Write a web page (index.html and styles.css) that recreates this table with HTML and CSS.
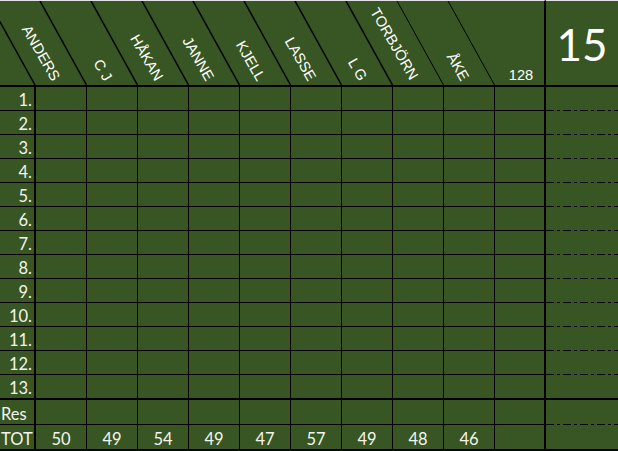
FILE: index.html
```html
<!DOCTYPE html>
<html>
<head>
<meta charset="utf-8">
<link rel="stylesheet" href="styles.css">
</head>
<body>
<div class="sheet">
  <div class="hdr">
    <svg width="544" height="84" viewBox="0 0 544 84">
      <g class="diag">
        <line x1="-12" y1="-1" x2="35" y2="84"/>
        <line x1="39.5" y1="-1" x2="86.5" y2="84"/>
        <line x1="90.5" y1="-1" x2="137.5" y2="84"/>
        <line x1="141.5" y1="-1" x2="188.5" y2="84"/>
        <line x1="192.5" y1="-1" x2="239.5" y2="84"/>
        <line x1="243.5" y1="-1" x2="290.5" y2="84"/>
        <line x1="294.5" y1="-1" x2="341.5" y2="84"/>
        <line x1="345.5" y1="-1" x2="392.5" y2="84"/>
        <line class="thin" x1="396.5" y1="-1" x2="443.5" y2="84"/>
        <line class="thin" x1="447.5" y1="-1" x2="494.5" y2="84"/>
      </g>
      <g class="lbl">
        <text x="52" y="81" transform="rotate(60 52 81)">ANDERS</text>
        <text x="104" y="81" transform="rotate(60 104 81)">C J</text>
        <text x="155" y="81" transform="rotate(60 155 81)">HÅKAN</text>
        <text x="206" y="81" transform="rotate(60 206 81)">JANNE</text>
        <text x="257" y="81" transform="rotate(60 257 81)">KJELL</text>
        <text x="308" y="81" transform="rotate(60 308 81)">LASSE</text>
        <text x="359" y="81" transform="rotate(60 359 81)">L G</text>
        <text x="410" y="80" transform="rotate(60 410 80)">TORBJÖRN</text>
        <text x="461" y="81" transform="rotate(60 461 81)">ÅKE</text>
        <text class="sum" x="521" y="79">128</text>
      </g>
    </svg>
  </div>
  <div class="big">15</div>

  <div class="row"><div class="c n">1.</div><div class="c"></div><div class="c"></div><div class="c"></div><div class="c"></div><div class="c"></div><div class="c"></div><div class="c"></div><div class="c"></div><div class="c"></div><div class="c k"></div><div class="c r"></div></div>
  <div class="row"><div class="c n">2.</div><div class="c"></div><div class="c"></div><div class="c"></div><div class="c"></div><div class="c"></div><div class="c"></div><div class="c"></div><div class="c"></div><div class="c"></div><div class="c k"></div><div class="c r"></div></div>
  <div class="row"><div class="c n">3.</div><div class="c"></div><div class="c"></div><div class="c"></div><div class="c"></div><div class="c"></div><div class="c"></div><div class="c"></div><div class="c"></div><div class="c"></div><div class="c k"></div><div class="c r"></div></div>
  <div class="row"><div class="c n">4.</div><div class="c"></div><div class="c"></div><div class="c"></div><div class="c"></div><div class="c"></div><div class="c"></div><div class="c"></div><div class="c"></div><div class="c"></div><div class="c k"></div><div class="c r"></div></div>
  <div class="row"><div class="c n">5.</div><div class="c"></div><div class="c"></div><div class="c"></div><div class="c"></div><div class="c"></div><div class="c"></div><div class="c"></div><div class="c"></div><div class="c"></div><div class="c k"></div><div class="c r"></div></div>
  <div class="row"><div class="c n">6.</div><div class="c"></div><div class="c"></div><div class="c"></div><div class="c"></div><div class="c"></div><div class="c"></div><div class="c"></div><div class="c"></div><div class="c"></div><div class="c k"></div><div class="c r"></div></div>
  <div class="row"><div class="c n">7.</div><div class="c"></div><div class="c"></div><div class="c"></div><div class="c"></div><div class="c"></div><div class="c"></div><div class="c"></div><div class="c"></div><div class="c"></div><div class="c k"></div><div class="c r"></div></div>
  <div class="row"><div class="c n">8.</div><div class="c"></div><div class="c"></div><div class="c"></div><div class="c"></div><div class="c"></div><div class="c"></div><div class="c"></div><div class="c"></div><div class="c"></div><div class="c k"></div><div class="c r"></div></div>
  <div class="row"><div class="c n">9.</div><div class="c"></div><div class="c"></div><div class="c"></div><div class="c"></div><div class="c"></div><div class="c"></div><div class="c"></div><div class="c"></div><div class="c"></div><div class="c k"></div><div class="c r"></div></div>
  <div class="row"><div class="c n">10.</div><div class="c"></div><div class="c"></div><div class="c"></div><div class="c"></div><div class="c"></div><div class="c"></div><div class="c"></div><div class="c"></div><div class="c"></div><div class="c k"></div><div class="c r"></div></div>
  <div class="row"><div class="c n">11.</div><div class="c"></div><div class="c"></div><div class="c"></div><div class="c"></div><div class="c"></div><div class="c"></div><div class="c"></div><div class="c"></div><div class="c"></div><div class="c k"></div><div class="c r"></div></div>
  <div class="row"><div class="c n">12.</div><div class="c"></div><div class="c"></div><div class="c"></div><div class="c"></div><div class="c"></div><div class="c"></div><div class="c"></div><div class="c"></div><div class="c"></div><div class="c k"></div><div class="c r"></div></div>
  <div class="row thick"><div class="c n">13.</div><div class="c"></div><div class="c"></div><div class="c"></div><div class="c"></div><div class="c"></div><div class="c"></div><div class="c"></div><div class="c"></div><div class="c"></div><div class="c k"></div><div class="c r"></div></div>
  <div class="row"><div class="c n l">Res</div><div class="c"></div><div class="c"></div><div class="c"></div><div class="c"></div><div class="c"></div><div class="c"></div><div class="c"></div><div class="c"></div><div class="c"></div><div class="c k"></div><div class="c r"></div></div>
  <div class="row thick"><div class="c n l">TOT</div><div class="c">50</div><div class="c">49</div><div class="c">54</div><div class="c">49</div><div class="c">47</div><div class="c">57</div><div class="c">49</div><div class="c">48</div><div class="c">46</div><div class="c k"></div><div class="c r"></div></div>
</div>
</body>
</html>
```

FILE: styles.css
```css
* {
  box-sizing: border-box;
  margin: 0;
  padding: 0;
}

html, body {
  background: #375623;
}

body {
  width: 618px;
  height: 451px;
  overflow: hidden;
}

.sheet {
  display: grid;
  grid-template-columns: 36px repeat(10, 51px) 72px;
  grid-template-rows: 87px repeat(12, 24px) 25px 25px 26px;
  width: 618px;
  height: 451px;
  background: #375623;
  color: #f4f4ec;
  font-family: Lato, "Liberation Sans", sans-serif;
  font-size: 16.5px;
}

.hdr {
  grid-column: 1 / 12;
  border-top: 1px solid #e2e2e2;
  border-bottom: 2px solid #000;
  border-right: 2px solid #000;
}

.hdr svg {
  display: block;
}

.diag line {
  stroke: #000;
  stroke-width: 1.5;
}

.diag line.thin {
  stroke-width: 1;
}

.lbl text {
  fill: #fff;
  font-family: "Liberation Sans", Arial, sans-serif;
  font-size: 14.67px;
  text-anchor: end;
}

.lbl text.sum {
  text-anchor: middle;
}

.big {
  border-top: 1px solid #e2e2e2;
  border-bottom: 2px solid #000;
  display: flex;
  align-items: center;
  justify-content: center;
  font-size: 44px;
  color: #fff;
  padding-top: 2px;
}

.row {
  display: contents;
}

.c {
  border-right: 1px solid #000;
  border-bottom: 1px solid #000;
  display: flex;
  align-items: flex-end;
  justify-content: center;
  line-height: 19px;
}

.c.n {
  border-right-width: 2px;
  justify-content: flex-end;
  padding-right: 2px;
}

.c.n.l {
  justify-content: flex-start;
  padding-left: 1px;
  padding-right: 0;
}

.c.k {
  border-right-width: 2px;
}

.c.r {
  border-right: 0;
  border-bottom: 0;
  background-image: repeating-linear-gradient(to right,
    #000 0 8px, transparent 8px 11px,
    #000 11px 14px, transparent 14px 17px);
  background-size: 100% 1px;
  background-position: left bottom;
  background-repeat: no-repeat;
}

.thick .c {
  border-bottom-width: 2px;
}

.thick .c.r {
  border-bottom: 2px solid #000;
  background: none;
}
```
